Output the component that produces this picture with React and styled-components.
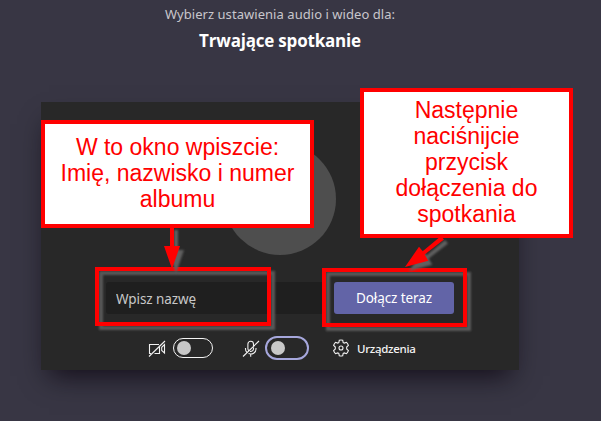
import React from "react";
import styled, { createGlobalStyle } from "styled-components";

const Global = createGlobalStyle`
  * { box-sizing: border-box; }
  body { margin: 0; background: #383644; overflow: hidden; }
`;

const Page = styled.main`
  position: relative;
  height: 421px;
  overflow: hidden;
  background: #383644;
  font-family: "Open Sans", "Noto Sans", sans-serif;
`;

const Header = styled.header`
  width: 560px;
  height: 102px;
  padding-top: 4px;
  text-align: center;
  white-space: nowrap;
`;

const Subtitle = styled.p`
  margin: 0;
  color: #c8c6cc;
  font-family: "Noto Sans", sans-serif;
  font-size: 13px;
  line-height: 20px;
  letter-spacing: 0.05px;
`;

const Title = styled.h1`
  margin: 5px 0 0;
  color: #fff;
  font-size: 17px;
  font-weight: 700;
  line-height: 24px;
  letter-spacing: -0.2px;
`;

const Card = styled.section`
  display: flex;
  flex-direction: column;
  align-items: center;
  width: 478px;
  height: 268px;
  margin-left: 41px;
  padding-top: 41px;
  background: #282828;
  box-shadow: 0 14px 26px -8px rgba(8, 2, 12, 0.75);
`;

const Avatar = styled.div`
  width: 112px;
  height: 112px;
  border-radius: 50%;
  background: #4e4e4e;
`;

const JoinRow = styled.div`
  display: flex;
  gap: 8px;
  width: 348px;
  margin-top: 27px;
`;

const NameInput = styled.input`
  width: 220px;
  height: 32px;
  padding: 2px 10px 0 10px;
  border: 0;
  border-radius: 3px;
  background: #1f1f1f;
  color: #c8c8c8;
  font: 13.5px/30px "Noto Sans", sans-serif;
  letter-spacing: -0.08px;
  &::placeholder { color: #c8c8c8; opacity: 1; }
`;

const JoinButton = styled.button`
  width: 120px;
  height: 32px;
  padding: 0;
  border: 0;
  border-radius: 3px;
  background: #6264a7;
  color: #fff;
  font: 400 13.5px/32px "Noto Sans", sans-serif;
  letter-spacing: -0.1px;
`;

const Controls = styled.div`
  display: flex;
  align-items: center;
  height: 24px;
  width: 478px;
  margin-top: 22px;
  padding-left: 107px;
`;

const Icon = styled.svg`
  flex: none;
  width: 18px;
  height: 18px;
  fill: none;
  stroke: #f0f0f0;
  stroke-width: 1.1;
`;

const Toggle = styled.span`
  display: flex;
  flex: none;
  align-items: center;
  width: ${(p) => (p.$focused ? 44 : 40)}px;
  height: ${(p) => (p.$focused ? 24 : 20)}px;
  margin: ${(p) => (p.$focused ? "0 23px 0 5px" : "0 29px 0 7px")};
  padding-left: ${(p) => (p.$focused ? 4 : 3)}px;
  border: ${(p) => (p.$focused ? "2px solid #a6a7dc" : "1px solid #f4f4f4")};
  border-radius: 12px;
  &::before {
    content: "";
    width: 14px;
    height: 14px;
    border-radius: 50%;
    background: #c8c8c8;
  }
`;

const Devices = styled.span`
  margin: 2px 0 0 7px;
  color: #f4f4f4;
  font: 500 11.5px/18px "Noto Sans", sans-serif;
  letter-spacing: -0.3px;
`;

const Highlight = styled.div`
  position: absolute;
  left: ${(p) => p.$x}px;
  top: ${(p) => p.$y}px;
  width: ${(p) => p.$w}px;
  height: 59px;
  border: 4px solid #f00;
  filter: drop-shadow(4px 4px 1px #585858);
`;

const Arrows = styled.svg`
  position: absolute;
  left: 0;
  top: 0;
  width: 601px;
  height: 421px;
  pointer-events: none;
  fill: #f00;
  stroke: none;
  filter: drop-shadow(4px 4px 1px #606060);
`;

const Callout = styled.div`
  position: absolute;
  left: ${(p) => p.$x}px;
  top: ${(p) => p.$y}px;
  width: ${(p) => p.$w}px;
  height: ${(p) => p.$h}px;
  padding-top: ${(p) => p.$pad}px;
  border: 4px solid #f00;
  background: #fff;
  color: #f00;
  font: 23px/26px "Liberation Sans", Arial, sans-serif;
  text-align: center;
  white-space: pre-line;
`;

export default function App() {
  return (
    <Page>
      <Global />
      <Header>
        <Subtitle>Wybierz ustawienia audio i wideo dla:</Subtitle>
        <Title>Trwające spotkanie</Title>
      </Header>
      <Card>
        <Avatar />
        <JoinRow>
          <NameInput placeholder="Wpisz nazwę" aria-label="Wpisz nazwę" />
          <JoinButton>Dołącz teraz</JoinButton>
        </JoinRow>
        <Controls>
          <Icon viewBox="0 0 18 18">
            <path d="M11 5.5H1.5v9H3M6.5 14.5h5v-8M16.5 5.5v8.5l-2.8-2.5V8.3zM1 17.5 17 2" />
          </Icon>
          <Toggle />
          <Icon viewBox="0 0 18 18">
            <path d="M11.5 7.5V5a2.8 2.8 0 0 0-5.6 0v4.5c0 .8.3 1.5.8 2M8 12.4a2.8 2.8 0 0 0 3.5-2.7V8.5M3.5 9v1c0 1.3.5 2.4 1.3 3.3M6.5 14.6c3.8 1.3 7.5-.8 7.5-4.6V9M8.7 15v2.7M1 17.5 17 2" />
          </Icon>
          <Toggle $focused />
          <Icon viewBox="0 0 18 18">
            <path d="M7.3 1.3 Q9 .8 10.7 1.3L11.2 3.6L12.3 4.1L14.5 3.3Q15.8 4.6 16.4 6.4L14.7 8V10L16.4 11.6Q15.8 13.4 14.5 14.7L12.3 13.9L11.2 14.4L10.7 16.7Q9 17.2 7.3 16.7L6.8 14.4L5.7 13.9L3.5 14.7Q2.2 13.4 1.6 11.6L3.3 10V8L1.6 6.4Q2.2 4.6 3.5 3.3L5.7 4.1L6.8 3.6Z" />
            <circle cx="9" cy="9" r="2" />
          </Icon>
          <Devices>Urządzenia</Devices>
        </Controls>
      </Card>
      <Highlight $x={95} $y={267} $w={176} />
      <Highlight $x={322} $y={268} $w={145} />
      <Arrows viewBox="0 0 601 421">
        <path d="M170 226h4v20h6l-8 23-8-23h6z" />
        <path d="M441 236l3 3.5-19.3 15 3.6 6.2-23.3 6.3 14-20.3 3.7 4.5z" />
      </Arrows>
      <Callout $x={41} $y={120} $w={273} $h={108} $pad={10}>
        {"W to okno wpiszcie:\nImię, nazwisko i numer\nalbumu"}
      </Callout>
      <Callout $x={360} $y={88} $w={213} $h={150} $pad={5}>
        {"Następnie\nnaciśnijcie\nprzycisk\ndołączenia do\nspotkania"}
      </Callout>
    </Page>
  );
}
